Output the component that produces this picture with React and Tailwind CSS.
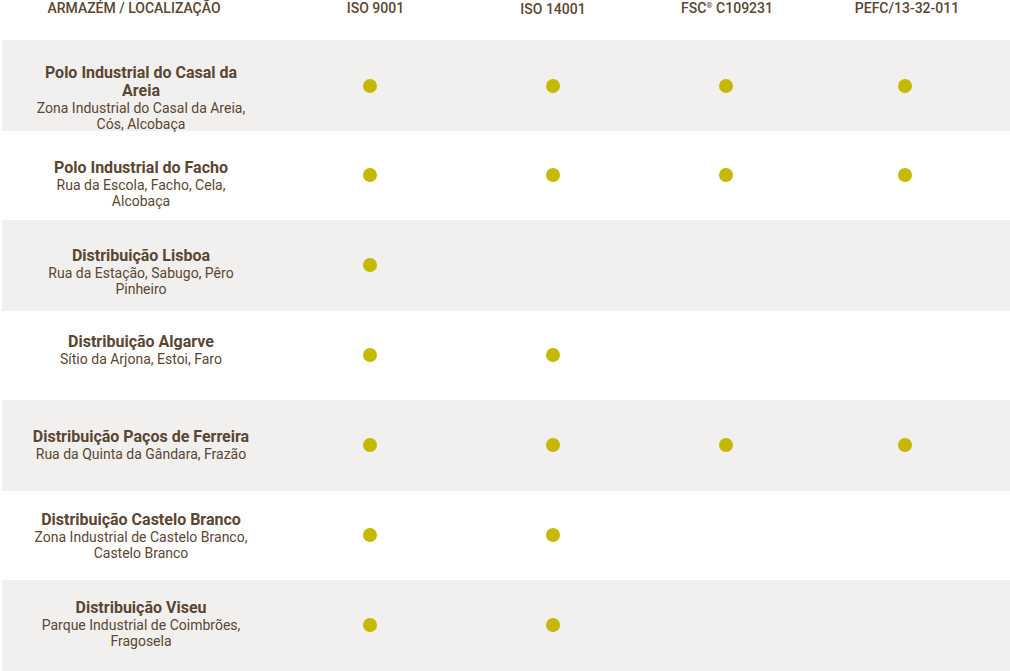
const Rows = [
  {
    id: 1,
    name: 'Polo Industrial do Casal da Areia',
    address: 'Zona Industrial do Casal da Areia, Cós, Alcobaça',
    certs: [true, true, true, true],
    bg: 'bg-[#f1f0ee]',
    h: 'h-[91px]',
    pt: 'pt-[24px]',
  },
  {
    id: 2,
    name: 'Polo Industrial do Facho',
    address: 'Rua da Escola, Facho, Cela, Alcobaça',
    certs: [true, true, true, true],
    bg: 'bg-white',
    h: 'h-[89px]',
    pt: 'pt-[28px]',
  },
  {
    id: 3,
    name: 'Distribuição Lisboa',
    address: 'Rua da Estação, Sabugo, Pêro Pinheiro',
    certs: [true, false, false, false],
    bg: 'bg-[#f1f0ee]',
    h: 'h-[91px]',
    pt: 'pt-[27px]',
  },
  {
    id: 4,
    name: 'Distribuição Algarve',
    address: 'Sítio da Arjona, Estoi, Faro',
    certs: [true, true, false, false],
    bg: 'bg-white',
    h: 'h-[89px]',
    pt: 'pt-[22px]',
  },
  {
    id: 5,
    name: 'Distribuição Paços de Ferreira',
    address: 'Rua da Quinta da Gândara, Frazão',
    certs: [true, true, true, true],
    bg: 'bg-[#f1f0ee]',
    h: 'h-[91px]',
    pt: 'pt-[28px]',
  },
  {
    id: 6,
    name: 'Distribuição Castelo Branco',
    address: 'Zona Industrial de Castelo Branco, Castelo Branco',
    certs: [true, true, false, false],
    bg: 'bg-white',
    h: 'h-[89px]',
    pt: 'pt-[20px]',
  },
  {
    id: 7,
    name: 'Distribuição Viseu',
    address: 'Parque Industrial de Coimbrões, Fragosela',
    certs: [true, true, false, false],
    bg: 'bg-[#f1f0ee]',
    h: 'h-[91px]',
    pt: 'pt-[19px]',
  },
];

const cols = 'grid grid-cols-[278px_180px_186px_160px_198px]';

const Dot = () => <span className="block w-[14px] h-[14px] rounded-full bg-[#c5b900]" />;

const App = () => {
  return (
    <div className="w-[1010px] h-[671px] overflow-hidden bg-white text-[#5a4632] font-['Roboto',sans-serif]">
      {/* Header */}
      <div className={`${cols} h-[40px] pl-[2px] text-[14px] leading-4 font-medium`}>
        <div className="text-center pr-[14px] uppercase">Armazém / Localização</div>
        <div className="text-center pl-[11px]">ISO 9001</div>
        <div className="text-center pt-[1px]">ISO 14001</div>
        <div className="text-center pl-[2px]">
          FSC<span className="relative -top-[5px] text-[8px]">®</span> C109231
        </div>
        <div className="text-center pl-[4px]">PEFC/13-32-011</div>
      </div>

      {/* Rows */}
      {Rows.map((row) => (
        <div key={row.id} className={`${row.bg} ${row.h} ml-[2px]`}>
          <div className={`${cols} h-full`}>
            <div className={`flex justify-center ${row.pt}`}>
              <div className="w-[222px] text-center">
                <div className="text-[16px] leading-[18px] font-bold">{row.name}</div>
                <div className="text-[14px] leading-4">{row.address}</div>
              </div>
            </div>
            {row.certs.map((has, i) => (
              <div key={i} className="flex items-center justify-center pb-px">
                {has && <Dot />}
              </div>
            ))}
          </div>
        </div>
      ))}
    </div>
  );
};

export default App;
